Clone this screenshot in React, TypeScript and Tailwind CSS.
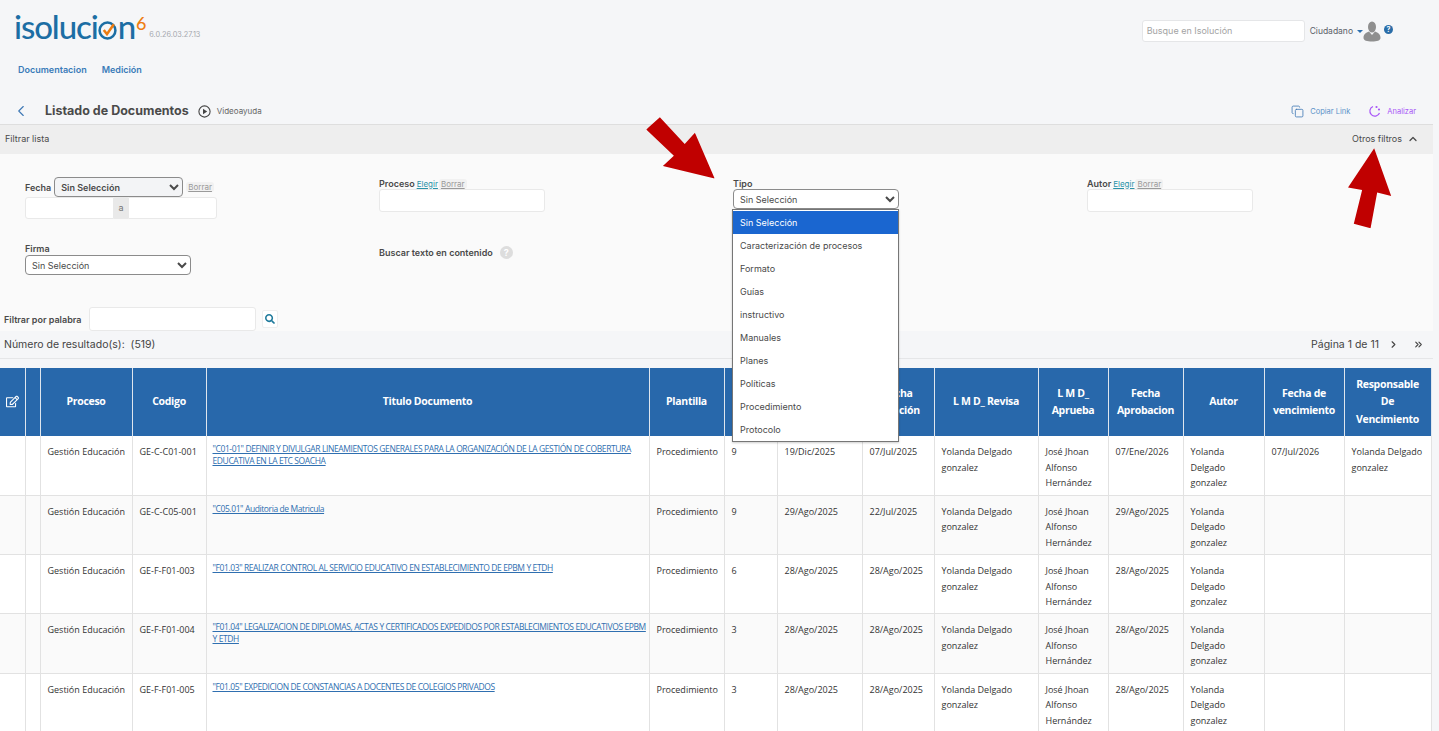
import { ChevronLeft, ChevronUp, ChevronRight, ChevronsRight, Copy } from "lucide-react";
import { FaRegEdit, FaSearch } from "react-icons/fa";

const ui = "font-['Inter',sans-serif]";
const cellFont = "font-['Open_Sans',sans-serif]";

const TIPOS = [
  "Sin Selección",
  "Caracterización de procesos",
  "Formato",
  "Guías",
  "instructivo",
  "Manuales",
  "Planes",
  "Políticas",
  "Procedimiento",
  "Protocolo",
];

const YOLANDA = "Yolanda Delgado gonzalez";
const JOSE = "José Jhoan Alfonso Hernández";

const ROWS = [
  {
    code: "GE-C-C01-001",
    title: "\"C01-01\" DEFINIR Y DIVULGAR LINEAMIENTOS GENERALES PARA LA ORGANIZACIÓN DE LA GESTIÓN DE COBERTURA EDUCATIVA EN LA ETC SOACHA",
    version: "9",
    f1: "19/Dic/2025",
    f2: "07/Jul/2025",
    f3: "07/Ene/2026",
    venc: "07/Jul/2026",
    resp: YOLANDA,
  },
  { code: "GE-C-C05-001", title: "\"C05.01\" Auditoria de Matricula", version: "9", f1: "29/Ago/2025", f2: "22/Jul/2025", f3: "29/Ago/2025", venc: "", resp: "" },
  { code: "GE-F-F01-003", title: "\"F01.03\" REALIZAR CONTROL AL SERVICIO EDUCATIVO EN ESTABLECIMIENTO DE EPBM Y ETDH", version: "6", f1: "28/Ago/2025", f2: "28/Ago/2025", f3: "28/Ago/2025", venc: "", resp: "" },
  { code: "GE-F-F01-004", title: "\"F01.04\" LEGALIZACION DE DIPLOMAS, ACTAS Y CERTIFICADOS EXPEDIDOS POR ESTABLECIMIENTOS EDUCATIVOS EPBM Y ETDH", version: "3", f1: "28/Ago/2025", f2: "28/Ago/2025", f3: "28/Ago/2025", venc: "", resp: "" },
  { code: "GE-F-F01-005", title: "\"F01.05\" EXPEDICION DE CONSTANCIAS A DOCENTES DE COLEGIOS PRIVADOS", version: "3", f1: "28/Ago/2025", f2: "28/Ago/2025", f3: "28/Ago/2025", venc: "", resp: "" },
];

const COLS = [25, 15, 92, 74, 443, 75, 53, 85, 72, 104, 70, 75, 81, 80, 87];

// las dos columnas tapadas por la lista abierta no se leen en la captura
const HEADERS = [
  "",
  "",
  "Proceso",
  "Codigo",
  "Titulo Documento",
  "Plantilla",
  "",
  "",
  "Fecha Creación",
  "L M D_ Revisa",
  "L M D_ Aprueba",
  "Fecha Aprobacion",
  "Autor",
  "Fecha de vencimiento",
  "Responsable De Vencimiento",
];

function Logo() {
  return (
    <div className="flex items-start text-[#1c6ea4] font-['Lato',sans-serif] font-medium text-[33px] leading-[38px] tracking-[-1.1px]">
      <span>isoluci</span>
      <svg width="19" height="19" viewBox="0 0 18 18" className="mt-[14px] mx-[0.5px]">
        <circle cx="9" cy="9" r="7.5" fill="none" stroke="#1c6ea4" strokeWidth="2.4" />
        <path d="M5.5 8.5 L8.5 12.5 L15 3" fill="none" stroke="#ee7d11" strokeWidth="2.4" />
      </svg>
      <span>n</span>
      <span className="text-[#ee7d11] text-[18px] leading-[18px] mt-[7px] ml-[1px]">6</span>
    </div>
  );
}

function PersonIcon() {
  return (
    <svg width="18" height="21" viewBox="0 0 18 21" fill="#8f8f8f">
      <ellipse cx="9" cy="6" rx="4" ry="5.5" />
      <path d="M0.5 17 C0.5 13 3 11.5 6 10.5 L9 14 L12 10.5 C15 11.5 17.5 13 17.5 17 C17.5 19.5 14 20.5 9 20.5 C4 20.5 0.5 19.5 0.5 17 Z" />
    </svg>
  );
}

function FilterLinks({ elegir = true }: { elegir?: boolean }) {
  return (
    <span className={`inline-flex items-center gap-[1px] text-[8px] leading-[10px] font-normal ${elegir ? "ml-[2px]" : ""}`}>
      {elegir && <span className="text-[#2a93a8] underline">Elegir</span>}
      <span className="bg-[#f1f1f1] rounded-[3px] px-[2px] text-[#9a9a9a] underline">Borrar</span>
    </span>
  );
}

function Label({ children }: { children: React.ReactNode }) {
  return <span className="block text-[9px] leading-[11px] font-semibold text-[#4a4a4a]">{children}</span>;
}

function NativeSelect({ w, bold, soft }: { w: string; bold?: boolean; soft?: boolean }) {
  return (
    <select
      defaultValue="Sin Selección"
      className={`block ${w} h-[20px] border border-[#8b8b8b] rounded-[4px] pl-[2px] text-[9px] text-[#4a4a4a] ${bold ? "font-semibold" : ""} ${soft ? "bg-[#f3f4f6]" : "bg-white"}`}
    >
      <option>Sin Selección</option>
    </select>
  );
}

function Arrow({ className }: { className: string }) {
  // flecha roja pegada encima de la captura
  return (
    <svg viewBox="0 0 46 84" className={`absolute ${className}`} fill="#c00000">
      <path d="M23 0 L46 48 L31 46 L28 84 L10 81 L15 45 L0 44 Z" />
    </svg>
  );
}

function Header() {
  return (
    <header className={`h-[124px] flex flex-col ${ui}`}>
      <div className="flex justify-between pl-[14px] pr-[46px] pt-[7px]">
        <div className="flex items-end gap-[3px]">
          <Logo />
          <span className="text-[7.3px] leading-[10px] text-[#a5a8ae] mb-[5px] ml-[1px]">6.0.26.03.27.13</span>
        </div>
        <div className="flex items-start pt-[13px]">
          <div className="w-[163px] h-[22px] bg-white border border-[#e5e6e8] rounded-[3px] text-[9px] leading-[20px] px-[4px] text-[#a3a3a3]">
            Busque en Isolución
          </div>
          <span className="text-[8.5px] leading-[22px] text-[#5a6068] ml-[5px]">Ciudadano</span>
          <span className="ml-[4px] mt-[10px] border-x-[3px] border-x-transparent border-t-[3px] border-t-[#2c6faf]" />
          <span className="mt-[1px]">
            <PersonIcon />
          </span>
          <span className="ml-[3px] mt-[5px] w-[9px] h-[9px] rounded-full bg-[#2a6da8] text-white text-[7px] leading-[9px] text-center font-bold">?</span>
        </div>
      </div>
      <nav className="flex gap-[15px] pl-[18px] mt-[19px] text-[9px] leading-[12px] font-semibold text-[#3a7bb8]">
        <span>Documentacion</span>
        <span>Medición</span>
      </nav>
      <div className="flex items-center justify-between mt-[26px] pl-[12px] pr-[23px]">
        <div className="flex items-center">
          <ChevronLeft size={18} strokeWidth={1.5} className="text-[#3d78b4]" />
          <h1 className="ml-[15px] text-[12.5px] font-bold text-[#4a4a4a]">Listado de Documentos</h1>
          <svg width="13" height="13" viewBox="0 0 13 13" className="ml-[9px]">
            <circle cx="6.5" cy="6.5" r="5.6" fill="none" stroke="#444" strokeWidth="1.1" />
            <path d="M5 3.8 L9.2 6.5 L5 9.2 Z" fill="#444" />
          </svg>
          <span className="ml-[6px] text-[8px] text-[#666]">Videoayuda</span>
        </div>
        <div className="flex items-center text-[7.5px]">
          <Copy size={13} strokeWidth={1.5} className="text-[#3d78b4]" />
          <span className="ml-[6px] text-[#5b93c8]">Copiar Link</span>
          <svg width="13" height="13" viewBox="0 0 13 13" fill="none" stroke="#a855f7" strokeWidth="1.2" className="ml-[18px]">
            <path d="M5 1.5 A5 5 0 1 0 11.5 8" />
            <circle cx="8.5" cy="2" r="0.5" />
            <circle cx="11" cy="4.5" r="0.5" />
          </svg>
          <span className="ml-[6px] text-[#a855f7]">Analizar</span>
        </div>
      </div>
    </header>
  );
}

function Filters() {
  return (
    <section className={`relative w-[1433px] bg-[#fafafa] border-t border-[#dedede] ${ui}`}>
      <div className="h-[29px] bg-[#eeeeee] flex items-center justify-between pl-[5px] pr-[14px] pb-[1px] text-[9px] text-[#4a4a4a]">
        <span>Filtrar lista</span>
        <span className="flex items-center gap-[5px]">
          Otros filtros
          <ChevronUp size={12} strokeWidth={2.5} />
        </span>
      </div>

      <div className="h-[153px] pl-[25px] grid grid-cols-[354px_354px_354px_1fr] grid-rows-[65px_1fr] pt-[24px]">
        <div className="-mt-[1px]">
          <div className="flex items-center gap-[3px]">
            <Label>Fecha</Label>
            <NativeSelect w="w-[129px]" bold soft />
            <FilterLinks elegir={false} />
          </div>
          <div className="flex w-[192px] h-[22px]">
            <div className="flex-1 bg-white border border-[#e9e9e9] rounded-l-[3px]" />
            <div className="w-[14px] bg-[#e9e9e9] text-[9px] leading-[22px] text-center text-[#777]">a</div>
            <div className="flex-1 bg-white border border-[#e9e9e9] rounded-r-[3px]" />
          </div>
        </div>
        <div>
          <div className="flex items-center h-[11px]">
            <Label>Proceso</Label>
            <FilterLinks />
          </div>
          <div className="w-[166px] h-[23px] bg-white border border-[#e9e9e9] rounded-[3px]" />
        </div>
        <div>
          <div className="h-[11px]">
            <Label>Tipo</Label>
          </div>
          <NativeSelect w="w-[166px]" />
        </div>
        <div>
          <div className="flex items-center h-[11px]">
            <Label>Autor</Label>
            <FilterLinks />
          </div>
          <div className="w-[166px] h-[23px] bg-white border border-[#e9e9e9] rounded-[3px]" />
        </div>
        <div>
          <div className="h-[12px]">
            <Label>Firma</Label>
          </div>
          <NativeSelect w="w-[166px]" />
        </div>
        <div className="flex items-start pt-[4px]">
          <Label>Buscar texto en contenido</Label>
          <span className="ml-[7px] -mt-[1px] w-[13px] h-[13px] rounded-full bg-[#dddddd] text-white text-[9px] leading-[13px] text-center font-bold">?</span>
        </div>
      </div>

      <div className="flex items-center h-[24px] pl-[4px]">
        <Label>Filtrar por palabra</Label>
        <div className="ml-[8px] w-[167px] h-[24px] bg-white border border-[#e9e9e9] rounded-[3px]" />
        <div className="ml-[6px] w-[16px] h-[18px] bg-white border border-[#eee] rounded-[2px] flex items-center justify-center">
          <FaSearch size={10} className="text-[#1f7a9c]" />
        </div>
      </div>

      <div className="h-[28px] bg-[#f5f6f8] border-b border-[#e5e6e8] flex items-center justify-between pl-[4px] pr-[9px] text-[10.5px] text-[#444]">
        <span>Número de resultado(s):&nbsp; (519)</span>
        <span className="flex items-center">
          Página 1 de 11
          <ChevronRight size={11} strokeWidth={2.5} className="ml-[9px]" />
          <ChevronsRight size={11} strokeWidth={2.5} className="ml-[14px]" />
        </span>
      </div>

      {/* lista abierta del select Tipo */}
      <ul className="absolute left-[732px] top-[84px] w-[167px] h-[233px] pt-[1px] bg-white border border-[#767676] shadow-[0_1px_2px_rgba(0,0,0,0.2)] text-[9px] text-[#4a4a4a] z-20">
        {TIPOS.map((t, i) => (
          <li key={t} className={`h-[23px] leading-[23px] pl-[7px] ${i === 0 ? "bg-[#1a66d0] text-white" : ""}`}>
            {t}
          </li>
        ))}
      </ul>
    </section>
  );
}

function DocsTable() {
  return (
    <table className={`table-fixed w-[1431px] mt-[9px] border-collapse ${cellFont}`}>
      <colgroup>
        {COLS.map((w, i) => (
          <col key={i} style={{ width: w }} />
        ))}
      </colgroup>
      <thead>
        <tr className="h-[68px] bg-[#2868ab] text-white text-[10.5px] leading-[17.5px]">
          {HEADERS.map((h, i) => (
            <th key={i} className="border-x border-[#dfe6ee] first:border-l-0 px-[4px] font-bold tracking-[-0.3px] text-center">
              {i === 0 ? <FaRegEdit size={13} className="mx-auto -mt-[2px] text-white" /> : h}
            </th>
          ))}
        </tr>
      </thead>
      <tbody className="text-[9px] leading-[15.5px] text-[#333]">
        {ROWS.map((r, i) => (
          <tr key={r.code} className={`h-[59.3px] border-b border-[#e2e2e2] align-top ${i % 2 ? "bg-[#fafafa]" : "bg-white"}`}>
            <td className="border-x border-[#e2e2e2] first:border-l-0" />
            <td className="border-x border-[#e2e2e2]" />
            {[
              "Gestión Educación",
              r.code,
              null,
              "Procedimiento",
              r.version,
              r.f1,
              r.f2,
              YOLANDA,
              JOSE,
              r.f3,
              YOLANDA,
              r.venc,
              r.resp,
            ].map((v, k) =>
              v === null ? (
                <td key={k} className="border-x border-[#e2e2e2] pl-[6px] pr-[2px] pt-[7px] text-[8.5px] leading-[12px] tracking-[-0.4px] text-[#2f6fb0] underline align-top">
                  {r.title}
                </td>
              ) : (
                <td key={k} className="border-x border-[#e2e2e2] pl-[7px] pr-[5px] pt-[8px] align-top">
                  {v}
                </td>
              )
            )}
          </tr>
        ))}
      </tbody>
    </table>
  );
}

export default function App() {
  return (
    <div className="relative w-[1439px] h-[731px] overflow-hidden bg-[#f5f6f8]">
      <Header />
      <Filters />
      <DocsTable />
      <Arrow className="left-[659px] top-[110px] w-[46px] h-[84px] rotate-[129deg]" />
      <Arrow className="left-[1347px] top-[148px] w-[46px] h-[80px] rotate-[6deg]" />
    </div>
  );
}
